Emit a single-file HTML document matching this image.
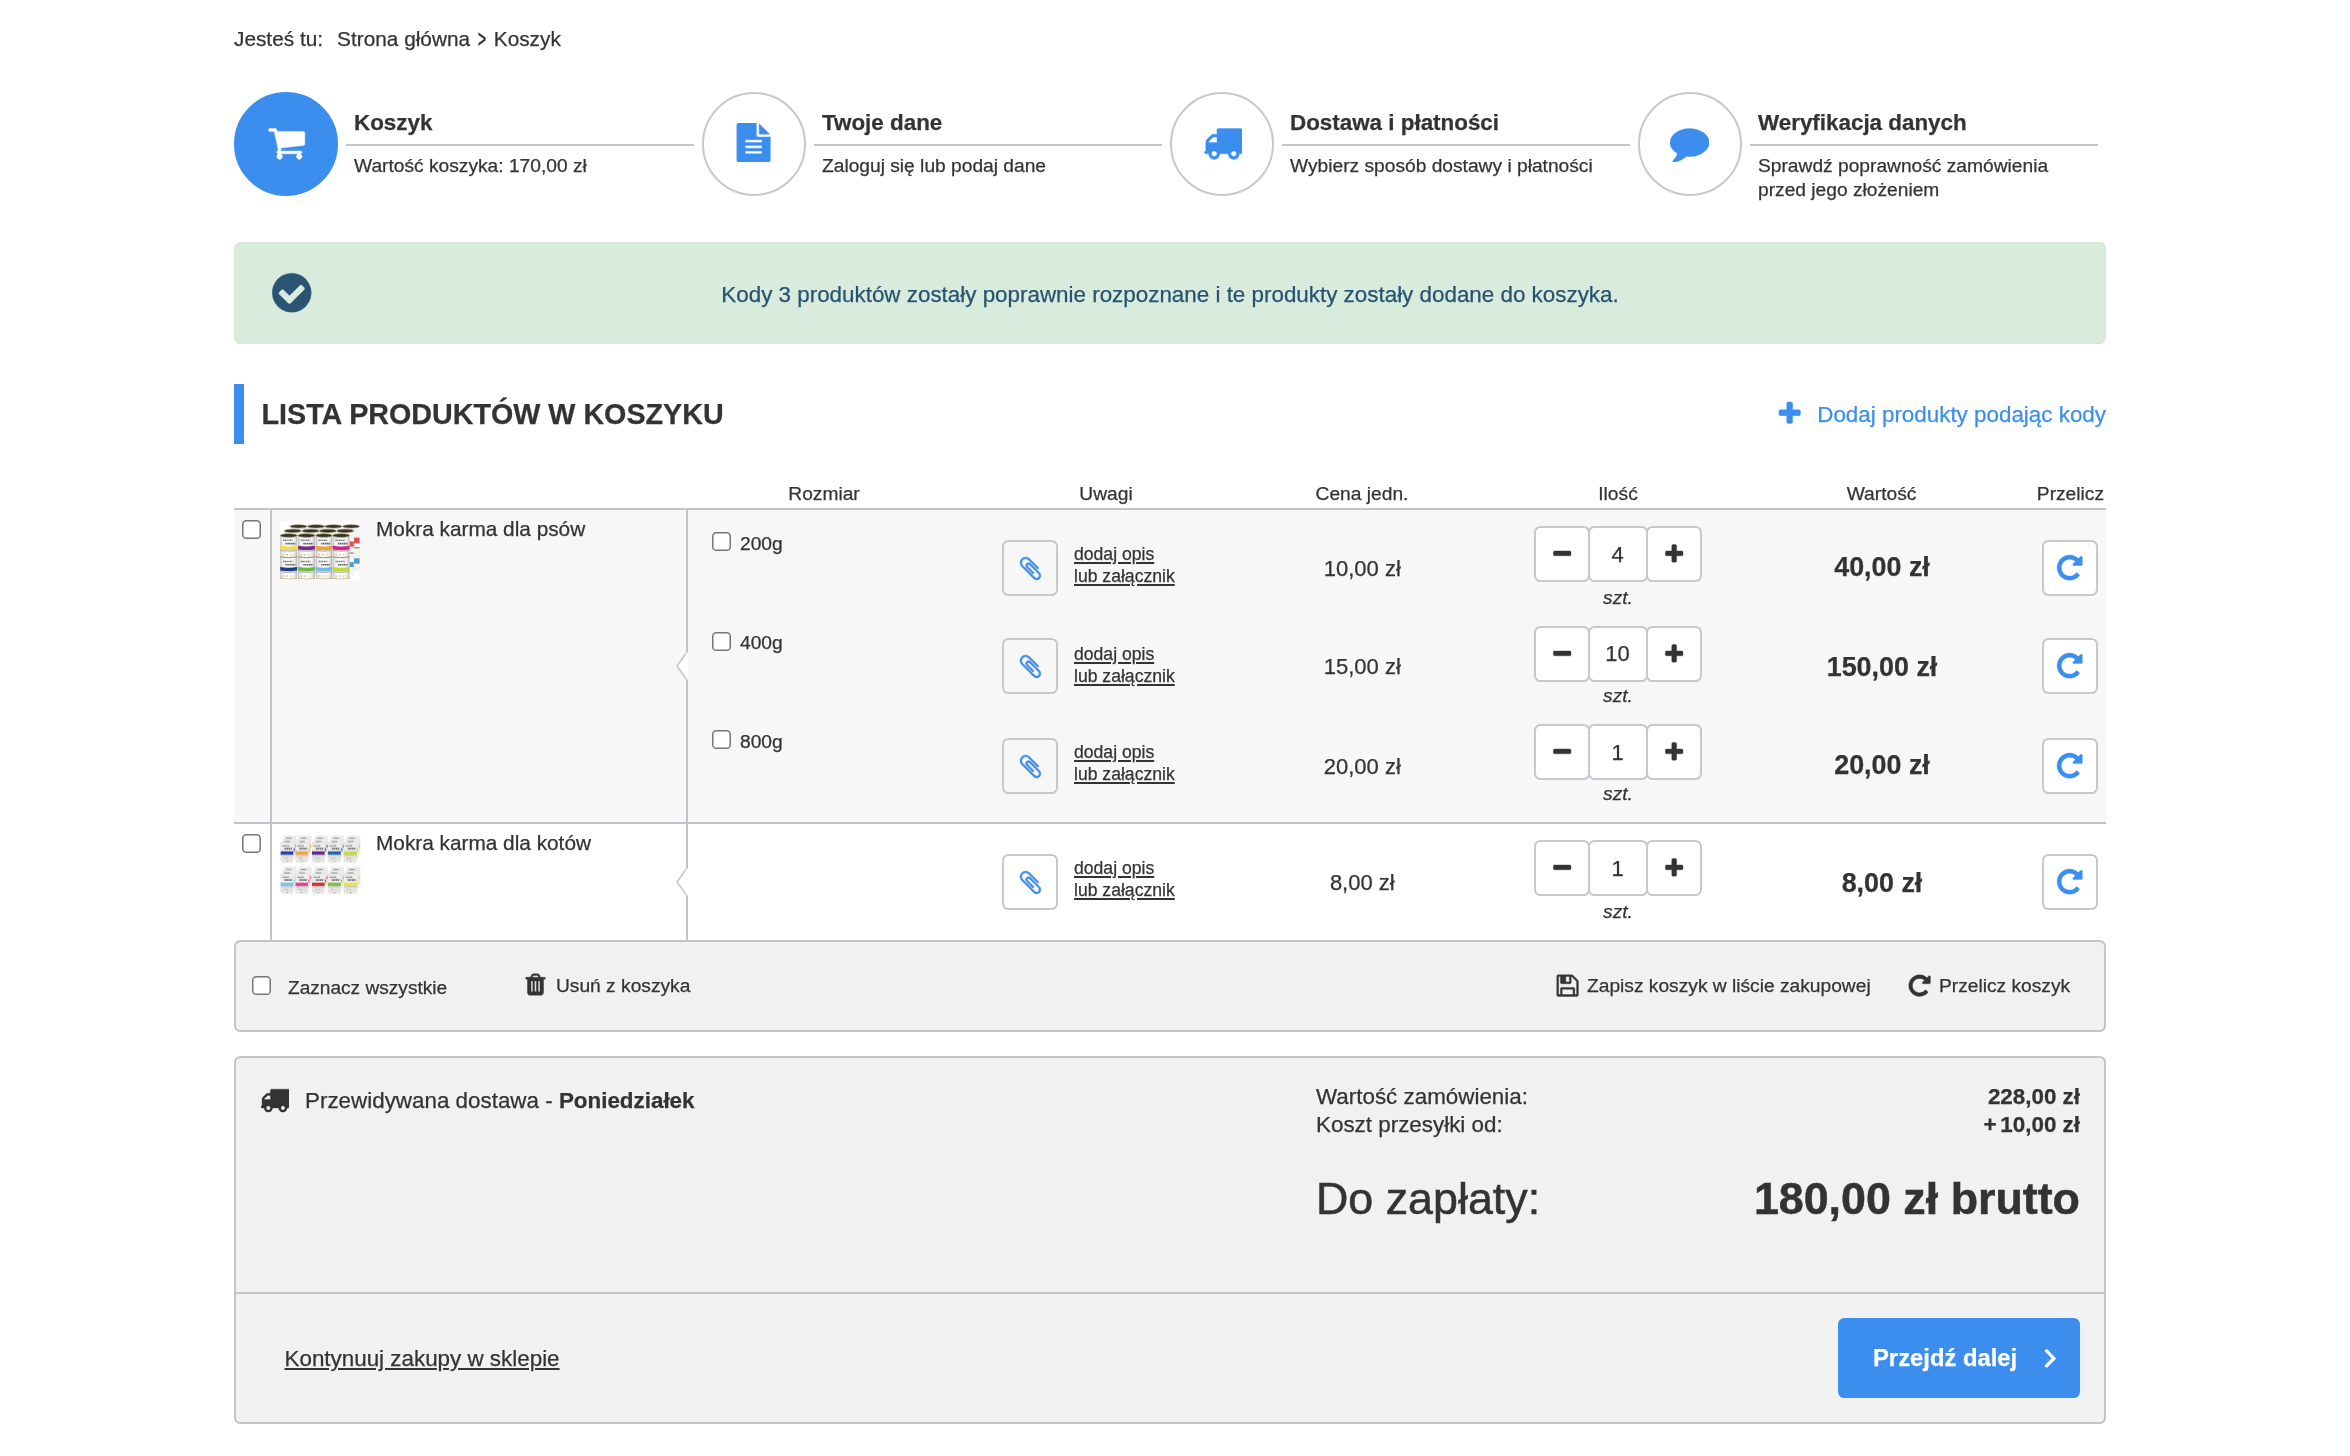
<!DOCTYPE html>
<html lang="pl">
<head>
<meta charset="utf-8">
<title>Koszyk</title>
<style>
*{box-sizing:border-box;margin:0;padding:0}
html,body{width:2350px;height:1456px;background:#fff;overflow:hidden}
body{-webkit-text-stroke:0.25px;font-family:"Liberation Sans",Arial,Helvetica,sans-serif;color:#333;position:relative;font-size:20.8px}
#page{position:absolute;left:0;top:0;width:2350px;height:1456px;will-change:transform}
.abs{position:absolute;white-space:nowrap}
svg{display:block}
a{color:inherit}
h1{font-weight:bold}
.bc span.l{margin-right:8.3px}
.bc .gt{display:inline-block;transform:scale(.66,1.18);-webkit-text-stroke:.6px}
.circ{width:104px;height:104px;border-radius:50%;border:2px solid #c6c8ca;background:#fff}
.circ.on{background:#3c8eee;border-color:#3c8eee}
.ln{background:#c2c5c7}
.alert{background:#d9ebdd;border:2px solid #d5ead8;border-radius:6.4px}
.hbar{background:#3c8eee}
.row1bg{background:#f7f7f7}
.hl{background:#c2c5c7}
.vl{background:#c2c5c7}
.cb{width:19px;height:19px;border:1.5px solid #767676;border-radius:4.5px;background:#fff}
.ibtn{width:56px;height:56px;border:2px solid #c6c9cb;border-radius:6.4px;background:#fff}
.clipb{background:transparent}
.note{text-decoration:underline;text-decoration-thickness:2px;text-underline-offset:2px}
.qb{width:56px;height:56px;border:2px solid #c6c9cb;border-radius:6.4px;background:#fff}
.qn{width:60px;height:56px;border:2px solid #c6c9cb;border-radius:6.4px;background:#fff}
.bar{background:#f1f1f1;border:2px solid #c3c5c7;border-radius:6.4px}
.sum{background:#f1f1f1;border:2px solid #c3c5c7;border-radius:6.4px}
.btn{background:#3c8eee;border-radius:6.4px}
</style>
</head>
<body>
<div id="page">
<nav class="abs bc" style="top:26px;font-size:20.8px;line-height:26px;left:234px;"><span class="l">Jesteś tu:</span> <a>Strona główna</a> <span class="gt">&gt;</span> <span>Koszyk</span></nav>

<div class="abs circ on" style="left:234px;top:92px;"></div>
<svg class="abs" style="left:266.5px;top:123px" width="39.2" height="39.2" viewBox="0 0 1792 1792"><path fill="#fff" stroke="#fff" stroke-width="18.3" d="M704 1536q0 52-38 90t-90 38-90-38-38-90 38-90 90-38 90 38 38 90zm896 0q0 52-38 90t-90 38-90-38-38-90 38-90 90-38 90 38 38 90zm128-1088v512q0 24-16.500 42.500t-40.500 21.500l-1044 122q13 60 13 70 0 16-24 64h920q26 0 45 19t19 45-19 45-45 19h-1024q-26 0-45-19t-19-45q0-11 8-31.500t16-36 21.500-40 15.500-29.500l-177-823h-204q-26 0-45-19t-19-45 19-45 45-19h256q16 0 28.500 6.500t19.500 15.500 13 24.500 8 26 5.500 29.500 4.500 26h1201q26 0 45 19t19 45z"/></svg>
<div class="abs" style="top:109px;font-size:22.4px;line-height:28px;font-weight:bold;left:354px;">Koszyk</div>
<div class="abs ln" style="left:346px;top:144px;width:348px;height:2px;"></div>
<div class="abs" style="top:154px;font-size:19.2px;line-height:24px;left:354px;">Wartość koszyka: 170,00 zł</div>
<div class="abs circ" style="left:702px;top:92px;"></div>
<svg class="abs" style="left:733.9px;top:123px" width="39.2" height="39.2" viewBox="0 0 1792 1792"><path fill="#3c8eee" stroke="#3c8eee" stroke-width="18.3" d="M1596 476q14 14 28 36h-472v-472q22 14 36 28zm-476 164h544v1056q0 40-28 68t-68 28h-1344q-40 0-68-28t-28-68v-1600q0-40 28-68t68-28h800v544q0 40 28 68t68 28zm160 736v-64q0-14-9-23t-23-9h-704q-14 0-23 9t-9 23v64q0 14 9 23t23 9h704q14 0 23-9t9-23zm0-256v-64q0-14-9-23t-23-9h-704q-14 0-23 9t-9 23v64q0 14 9 23t23 9h704q14 0 23-9t9-23zm0-256v-64q0-14-9-23t-23-9h-704q-14 0-23 9t-9 23v64q0 14 9 23t23 9h704q14 0 23-9t9-23z"/></svg>
<div class="abs" style="top:109px;font-size:22.4px;line-height:28px;font-weight:bold;left:822px;">Twoje dane</div>
<div class="abs ln" style="left:814px;top:144px;width:348px;height:2px;"></div>
<div class="abs" style="top:154px;font-size:19.2px;line-height:24px;left:822px;">Zaloguj się lub podaj dane</div>
<div class="abs circ" style="left:1170px;top:92px;"></div>
<svg class="abs" style="left:1202.6px;top:123px" width="39.2" height="39.2" viewBox="0 0 1792 1792"><path fill="#3c8eee" stroke="#3c8eee" stroke-width="18.3" d="M640 1408q0-52-38-90t-90-38-90 38-38 90 38 90 90 38 90-38 38-90zm-384-512h384v-256h-158q-13 0-22 9l-195 195q-9 9-9 22v30zm1280 512q0-52-38-90t-90-38-90 38-38 90 38 90 90 38 90-38 38-90zm256-1088v1024q0 15-4 26.500t-13.500 18.500-16.500 11.500-23.500 6-22.500 2-25.500 0-22.500-.5q0 106-75 181t-181 75-181-75-75-181h-384q0 106-75 181t-181 75-181-75-75-181h-64q-3 0-22.500.5t-25.500 0-22.500-2-23.500-6-16.500-11.500-13.500-18.500-4-26.500q0-26 19-45t45-19v-320q0-8-.5-35t0-38 2.500-34.500 6.500-37 14-30.500 22.500-30l198-198q19-19 50.500-32t58.500-13h160v-192q0-26 19-45t45-19h1024q26 0 45 19t19 45z"/></svg>
<div class="abs" style="top:109px;font-size:22.4px;line-height:28px;font-weight:bold;left:1290px;">Dostawa i płatności</div>
<div class="abs ln" style="left:1282px;top:144px;width:348px;height:2px;"></div>
<div class="abs" style="top:154px;font-size:19.2px;line-height:24px;left:1290px;">Wybierz sposób dostawy i płatności</div>
<div class="abs circ" style="left:1638px;top:92px;"></div>
<svg class="abs" style="left:1670.3px;top:123px" width="39.2" height="39.2" viewBox="0 0 1792 1792"><path fill="#3c8eee" stroke="#3c8eee" stroke-width="18.3" d="M1792 896q0 174-120 321.500t-326 233-450 85.500q-70 0-145-8-198 175-460 242-49 14-114 22-17 2-30.500-9t-17.500-29v-1q-3-4-.5-12t2-10 4.500-9.500l6-9 7-8.500 8-9q7-8 31-34.500t34.500-38 31-39.500 32.500-51 27-59 26-76q-157-89-247.500-220t-90.500-281q0-130 71-248.500t191-204.500 286-136.500 348-50.500q244 0 450 85.500t326 233 120 321.500z"/></svg>
<div class="abs" style="top:109px;font-size:22.4px;line-height:28px;font-weight:bold;left:1758px;">Weryfikacja danych</div>
<div class="abs ln" style="left:1750px;top:144px;width:348px;height:2px;"></div>
<div class="abs" style="top:154px;font-size:19.2px;line-height:24px;left:1758px;">Sprawdź poprawność zamówienia<br>przed jego złożeniem</div>

<div class="abs alert" style="left:234px;top:242px;width:1872px;height:102px;"></div>
<svg class="abs" style="left:269.25px;top:270.15px" width="45.5" height="45.5" viewBox="0 0 1792 1792"><path fill="#295573" stroke="#295573" stroke-width="15.8" d="M1412 734q0-28-18-46l-91-90q-19-19-45-19t-45 19l-408 407-226-226q-19-19-45-19t-45 19l-91 90q-18 18-18 46 0 27 18 45l362 362q19 19 45 19 27 0 46-19l543-543q18-18 18-45zm252 162q0 209-103 385.500t-279.500 279.500-385.500 103-385.500-103-279.500-279.500-103-385.500 103-385.500 279.500-279.500 385.500-103 385.500 103 279.500 279.500 103 385.500z"/></svg>
<div class="abs" style="top:281px;font-size:22.4px;line-height:28px;color:#265370;left:1170px;transform:translateX(-50%);">Kody 3 produktów zostały poprawnie rozpoznane i te produkty zostały dodane do koszyka.</div>

<div class="abs hbar" style="left:234px;top:384px;width:10px;height:60px;"></div>
<h1 class="abs" style="top:396px;font-size:28.7px;line-height:36px;font-weight:bold;left:261.5px;">LISTA PRODUKTÓW W KOSZYKU</h1>
<svg class="abs" style="left:1776.3px;top:400.48px" width="27.4" height="27.4" viewBox="0 0 1792 1792"><path fill="#3c8eee" stroke="#3c8eee" stroke-width="26.2" d="M1600 736v192q0 40-28 68t-68 28h-416v416q0 40-28 68t-68 28h-192q-40 0-68-28t-28-68v-416h-416q-40 0-68-28t-28-68v-192q0-40 28-68t68-28h416v-416q0-40 28-68t68-28h192q40 0 68 28t28 68v416h416q40 0 68 28t28 68z"/></svg>
<a class="abs" style="top:401px;font-size:22.4px;line-height:28px;color:#3c8eee;right:244px;">Dodaj produkty podając kody</a>

<div class="abs" style="top:482px;font-size:19.2px;line-height:24px;left:824px;transform:translateX(-50%);">Rozmiar</div>
<div class="abs" style="top:482px;font-size:19.2px;line-height:24px;left:1106px;transform:translateX(-50%);">Uwagi</div>
<div class="abs" style="top:482px;font-size:19.2px;line-height:24px;left:1362px;transform:translateX(-50%);">Cena jedn.</div>
<div class="abs" style="top:482px;font-size:19.2px;line-height:24px;left:1618px;transform:translateX(-50%);">Ilość</div>
<div class="abs" style="top:482px;font-size:19.2px;line-height:24px;left:1881.5px;transform:translateX(-50%);">Wartość</div>
<div class="abs" style="top:482px;font-size:19.2px;line-height:24px;right:246px;">Przelicz</div>
<div class="abs row1bg" style="left:234px;top:510px;width:1872px;height:312px;"></div>
<div class="abs hl" style="left:234px;top:508px;width:1872px;height:2px;"></div>
<div class="abs hl" style="left:234px;top:822px;width:1872px;height:2px;"></div>
<div class="abs vl" style="left:270px;top:510px;width:2px;height:430px;"></div>
<div class="abs vl" style="left:686px;top:510px;width:2px;height:430px;"></div>
<svg class="abs" style="left:675px;top:650.8px" width="13" height="30" viewBox="0 0 13 30"><path d="M12 1 L2 15 L12 29 Z" fill="#fff"/><path d="M12 1 L2 15 L12 29" fill="none" stroke="#ccc" stroke-width="1.8"/><rect x="11.2" y="1.8" width="1.8" height="26.4" fill="#fff"/></svg>
<svg class="abs" style="left:675px;top:866.6px" width="13" height="30" viewBox="0 0 13 30"><path d="M12 1 L2 15 L12 29 Z" fill="#fff"/><path d="M12 1 L2 15 L12 29" fill="none" stroke="#ccc" stroke-width="1.8"/><rect x="11.2" y="1.8" width="1.8" height="26.4" fill="#fff"/></svg>
<svg class="abs" style="left:242px;top:520px" width="19" height="19" viewBox="0 0 19 19"><rect x=".75" y=".75" width="17.5" height="17.5" rx="3.6" fill="#fff" stroke="#767676" stroke-width="1.5"/></svg>
<svg class="abs" style="left:242px;top:834px" width="19" height="19" viewBox="0 0 19 19"><rect x=".75" y=".75" width="17.5" height="17.5" rx="3.6" fill="#fff" stroke="#767676" stroke-width="1.5"/></svg>
<div class="abs" style="top:516px;font-size:20.8px;line-height:26px;left:376px;">Mokra karma dla psów</div>
<div class="abs" style="top:830px;font-size:20.8px;line-height:26px;left:376px;">Mokra karma dla kotów</div>
<svg class="abs" style="left:274px;top:516px" width="96" height="70" viewBox="0 0 1997 1456" aria-hidden="true"><defs><filter id="bl1" x="-5%" y="-5%" width="110%" height="110%"><feGaussianBlur stdDeviation="7"/></filter><linearGradient id="cg" x1="0" x2="1" y1="0" y2="0"><stop offset="0" stop-color="#b9b9b9"/><stop offset=".12" stop-color="#ececec"/><stop offset=".45" stop-color="#fff"/><stop offset=".85" stop-color="#efefef"/><stop offset="1" stop-color="#b4b4b4"/></linearGradient></defs><rect x="120" y="100" width="1670" height="1240" fill="#fff"/><g filter="url(#bl1)"><rect x="335" y="215" width="1445" height="920" fill="#e9e9e9"/><rect x="1660" y="215" width="120" height="920" fill="#f2f2f2"/><rect x="1665" y="450" width="115" height="120" fill="#d8352c" opacity=".85"/><rect x="1665" y="880" width="115" height="110" fill="#2d8fc4" opacity=".85"/><rect x="1660" y="650" width="120" height="22" fill="#8c7a48"/><ellipse cx="510" cy="215" rx="175" ry="34" fill="#34332c" stroke="#97834a" stroke-width="12"/><ellipse cx="875" cy="215" rx="175" ry="34" fill="#34332c" stroke="#97834a" stroke-width="12"/><ellipse cx="1235" cy="215" rx="175" ry="34" fill="#34332c" stroke="#97834a" stroke-width="12"/><ellipse cx="1605" cy="215" rx="175" ry="34" fill="#34332c" stroke="#97834a" stroke-width="12"/><rect x="215" y="310" width="1440" height="920" fill="#ececec"/><rect x="1570" y="310" width="90" height="920" fill="#f4f4f4"/><rect x="1575" y="530" width="85" height="110" fill="#d8352c" opacity=".85"/><rect x="1575" y="960" width="85" height="100" fill="#2d8fc4" opacity=".85"/><rect x="1570" y="760" width="90" height="22" fill="#8c7a48"/><ellipse cx="390" cy="310" rx="175" ry="34" fill="#34332c" stroke="#97834a" stroke-width="12"/><ellipse cx="760" cy="310" rx="175" ry="34" fill="#34332c" stroke="#97834a" stroke-width="12"/><ellipse cx="1120" cy="310" rx="175" ry="34" fill="#34332c" stroke="#97834a" stroke-width="12"/><ellipse cx="1482" cy="310" rx="175" ry="34" fill="#34332c" stroke="#97834a" stroke-width="12"/><rect x="130" y="405" width="350" height="455" fill="url(#cg)"/><path d="M130 620 Q305.0 650 480 620 L480 695 Q305.0 725 130 695 Z" fill="#f2dc4a"/><path d="M130 702 Q305.0 732 480 702 L480 730 Q305.0 760 130 730 Z" fill="#b5b5b5"/><path d="M190 505 h192.50000000000003" stroke="#555" stroke-width="30" stroke-dasharray="26 10" opacity=".8"/><path d="M240 575 h203.0" stroke="#444" stroke-width="34" stroke-dasharray="30 9" opacity=".85"/><circle cx="200" cy="805" r="16" fill="#d9b25a"/><circle cx="275" cy="805" r="16" fill="#8cc66a"/><circle cx="350" cy="805" r="16" fill="#ecc98a"/><circle cx="425" cy="805" r="16" fill="#ecdc7a"/><rect x="130" y="860" width="350" height="450" fill="url(#cg)"/><path d="M130 1060 Q305.0 1090 480 1060 L480 1135 Q305.0 1165 130 1135 Z" fill="#1f3b8c"/><path d="M130 1142 Q305.0 1172 480 1142 L480 1170 Q305.0 1200 130 1170 Z" fill="#b5b5b5"/><path d="M190 945 h192.50000000000003" stroke="#555" stroke-width="30" stroke-dasharray="26 10" opacity=".8"/><path d="M240 1015 h203.0" stroke="#444" stroke-width="34" stroke-dasharray="30 9" opacity=".85"/><circle cx="200" cy="1250" r="16" fill="#d9b25a"/><circle cx="275" cy="1250" r="16" fill="#8cc66a"/><circle cx="350" cy="1250" r="16" fill="#ecc98a"/><circle cx="425" cy="1250" r="16" fill="#ecdc7a"/><ellipse cx="305.0" cy="405" rx="173.0" ry="36" fill="#34332c" stroke="#97834a" stroke-width="12"/><path d="M130 850 Q305.0 885 480 850" fill="none" stroke="#7d6d3f" stroke-width="16"/><path d="M130 1295 Q305.0 1330 480 1295" fill="none" stroke="#b9a86a" stroke-width="14"/><rect x="500" y="405" width="350" height="455" fill="url(#cg)"/><path d="M500 620 Q675.0 650 850 620 L850 695 Q675.0 725 500 695 Z" fill="#7b2c8e"/><path d="M500 702 Q675.0 732 850 702 L850 730 Q675.0 760 500 730 Z" fill="#b5b5b5"/><path d="M560 505 h192.50000000000003" stroke="#555" stroke-width="30" stroke-dasharray="26 10" opacity=".8"/><path d="M610 575 h203.0" stroke="#444" stroke-width="34" stroke-dasharray="30 9" opacity=".85"/><circle cx="570" cy="805" r="16" fill="#d9b25a"/><circle cx="645" cy="805" r="16" fill="#8cc66a"/><circle cx="720" cy="805" r="16" fill="#ecc98a"/><circle cx="795" cy="805" r="16" fill="#ecdc7a"/><rect x="500" y="860" width="350" height="450" fill="url(#cg)"/><path d="M500 1060 Q675.0 1090 850 1060 L850 1135 Q675.0 1165 500 1135 Z" fill="#6bb843"/><path d="M500 1142 Q675.0 1172 850 1142 L850 1170 Q675.0 1200 500 1170 Z" fill="#b5b5b5"/><path d="M560 945 h192.50000000000003" stroke="#555" stroke-width="30" stroke-dasharray="26 10" opacity=".8"/><path d="M610 1015 h203.0" stroke="#444" stroke-width="34" stroke-dasharray="30 9" opacity=".85"/><circle cx="570" cy="1250" r="16" fill="#d9b25a"/><circle cx="645" cy="1250" r="16" fill="#8cc66a"/><circle cx="720" cy="1250" r="16" fill="#ecc98a"/><circle cx="795" cy="1250" r="16" fill="#ecdc7a"/><ellipse cx="675.0" cy="405" rx="173.0" ry="36" fill="#34332c" stroke="#97834a" stroke-width="12"/><path d="M500 850 Q675.0 885 850 850" fill="none" stroke="#7d6d3f" stroke-width="16"/><path d="M500 1295 Q675.0 1330 850 1295" fill="none" stroke="#b9a86a" stroke-width="14"/><rect x="870" y="405" width="335" height="455" fill="url(#cg)"/><path d="M870 620 Q1037.5 650 1205 620 L1205 695 Q1037.5 725 870 695 Z" fill="#f1a236"/><path d="M870 702 Q1037.5 732 1205 702 L1205 730 Q1037.5 760 870 730 Z" fill="#b5b5b5"/><path d="M930 505 h184.25000000000003" stroke="#555" stroke-width="30" stroke-dasharray="26 10" opacity=".8"/><path d="M980 575 h194.29999999999998" stroke="#444" stroke-width="34" stroke-dasharray="30 9" opacity=".85"/><circle cx="940" cy="805" r="16" fill="#d9b25a"/><circle cx="1015" cy="805" r="16" fill="#8cc66a"/><circle cx="1090" cy="805" r="16" fill="#ecc98a"/><circle cx="1165" cy="805" r="16" fill="#ecdc7a"/><rect x="870" y="860" width="335" height="450" fill="url(#cg)"/><path d="M870 1060 Q1037.5 1090 1205 1060 L1205 1135 Q1037.5 1165 870 1135 Z" fill="#6fb9e9"/><path d="M870 1142 Q1037.5 1172 1205 1142 L1205 1170 Q1037.5 1200 870 1170 Z" fill="#b5b5b5"/><path d="M930 945 h184.25000000000003" stroke="#555" stroke-width="30" stroke-dasharray="26 10" opacity=".8"/><path d="M980 1015 h194.29999999999998" stroke="#444" stroke-width="34" stroke-dasharray="30 9" opacity=".85"/><circle cx="940" cy="1250" r="16" fill="#d9b25a"/><circle cx="1015" cy="1250" r="16" fill="#8cc66a"/><circle cx="1090" cy="1250" r="16" fill="#ecc98a"/><circle cx="1165" cy="1250" r="16" fill="#ecdc7a"/><ellipse cx="1037.5" cy="405" rx="165.5" ry="36" fill="#34332c" stroke="#97834a" stroke-width="12"/><path d="M870 850 Q1037.5 885 1205 850" fill="none" stroke="#7d6d3f" stroke-width="16"/><path d="M870 1295 Q1037.5 1330 1205 1295" fill="none" stroke="#b9a86a" stroke-width="14"/><rect x="1220" y="405" width="350" height="455" fill="url(#cg)"/><path d="M1220 620 Q1395.0 650 1570 620 L1570 695 Q1395.0 725 1220 695 Z" fill="#d8218b"/><path d="M1220 702 Q1395.0 732 1570 702 L1570 730 Q1395.0 760 1220 730 Z" fill="#b5b5b5"/><path d="M1280 505 h192.50000000000003" stroke="#555" stroke-width="30" stroke-dasharray="26 10" opacity=".8"/><path d="M1330 575 h203.0" stroke="#444" stroke-width="34" stroke-dasharray="30 9" opacity=".85"/><circle cx="1290" cy="805" r="16" fill="#d9b25a"/><circle cx="1365" cy="805" r="16" fill="#8cc66a"/><circle cx="1440" cy="805" r="16" fill="#ecc98a"/><circle cx="1515" cy="805" r="16" fill="#ecdc7a"/><rect x="1220" y="860" width="350" height="450" fill="url(#cg)"/><path d="M1220 1060 Q1395.0 1090 1570 1060 L1570 1135 Q1395.0 1165 1220 1135 Z" fill="#bcd934"/><path d="M1220 1142 Q1395.0 1172 1570 1142 L1570 1170 Q1395.0 1200 1220 1170 Z" fill="#b5b5b5"/><path d="M1280 945 h192.50000000000003" stroke="#555" stroke-width="30" stroke-dasharray="26 10" opacity=".8"/><path d="M1330 1015 h203.0" stroke="#444" stroke-width="34" stroke-dasharray="30 9" opacity=".85"/><circle cx="1290" cy="1250" r="16" fill="#d9b25a"/><circle cx="1365" cy="1250" r="16" fill="#8cc66a"/><circle cx="1440" cy="1250" r="16" fill="#ecc98a"/><circle cx="1515" cy="1250" r="16" fill="#ecdc7a"/><ellipse cx="1395.0" cy="405" rx="173.0" ry="36" fill="#34332c" stroke="#97834a" stroke-width="12"/><path d="M1220 850 Q1395.0 885 1570 850" fill="none" stroke="#7d6d3f" stroke-width="16"/><path d="M1220 1295 Q1395.0 1330 1570 1295" fill="none" stroke="#b9a86a" stroke-width="14"/></g></svg>
<svg class="abs" style="left:274px;top:826px" width="96" height="80" viewBox="0 0 1747 1456" aria-hidden="true"><defs><filter id="bl2" x="-5%" y="-5%" width="110%" height="110%"><feGaussianBlur stdDeviation="8"/></filter></defs><g filter="url(#bl2)"><rect x="176" y="176" width="230" height="330" rx="18" fill="#ececec" stroke="#dcdcdc" stroke-width="6"/><rect x="216" y="214" width="103.5" height="16" fill="#4a4a4a" opacity=".75"/><rect x="380" y="341" width="26" height="55" fill="#2443ab" opacity=".85"/><rect x="148" y="238" width="230" height="330" rx="18" fill="#ececec" stroke="#dcdcdc" stroke-width="6"/><rect x="188" y="276" width="103.5" height="16" fill="#4a4a4a" opacity=".75"/><rect x="352" y="403" width="26" height="55" fill="#2443ab" opacity=".85"/><path d="M120 300 h230 v300 q0 60 -40 60 h-150 q-40 0 -40 -60 Z" fill="#e6e6e6" stroke="#d6d6d6" stroke-width="6"/><rect x="130" y="310" width="210" height="140" fill="#efefef"/><rect x="120" y="460" width="230" height="62" fill="#2443ab"/><rect x="128" y="526" width="214" height="18" fill="#bcbcbc"/><path d="M150 362 h126.50000000000001" stroke="#555" stroke-width="26" stroke-dasharray="24 8" opacity=".75"/><path d="M190 412 h142.6" stroke="#444" stroke-width="30" stroke-dasharray="28 8" opacity=".8"/><circle cx="195" cy="585" r="12" fill="#cf8a6a"/><circle cx="240" cy="585" r="12" fill="#86c06a"/><circle cx="285" cy="585" r="12" fill="#ecc98a"/><rect x="223.0" y="630" width="26" height="9" fill="#555"/><rect x="446" y="176" width="230" height="330" rx="18" fill="#ececec" stroke="#dcdcdc" stroke-width="6"/><rect x="486" y="214" width="103.5" height="16" fill="#4a4a4a" opacity=".75"/><rect x="650" y="341" width="26" height="55" fill="#f1a340" opacity=".85"/><rect x="418" y="238" width="230" height="330" rx="18" fill="#ececec" stroke="#dcdcdc" stroke-width="6"/><rect x="458" y="276" width="103.5" height="16" fill="#4a4a4a" opacity=".75"/><rect x="622" y="403" width="26" height="55" fill="#f1a340" opacity=".85"/><path d="M390 300 h230 v300 q0 60 -40 60 h-150 q-40 0 -40 -60 Z" fill="#e6e6e6" stroke="#d6d6d6" stroke-width="6"/><rect x="400" y="310" width="210" height="140" fill="#efefef"/><rect x="390" y="460" width="230" height="62" fill="#f1a340"/><rect x="398" y="526" width="214" height="18" fill="#bcbcbc"/><path d="M420 362 h126.50000000000001" stroke="#555" stroke-width="26" stroke-dasharray="24 8" opacity=".75"/><path d="M460 412 h142.6" stroke="#444" stroke-width="30" stroke-dasharray="28 8" opacity=".8"/><circle cx="465" cy="585" r="12" fill="#cf8a6a"/><circle cx="510" cy="585" r="12" fill="#86c06a"/><circle cx="555" cy="585" r="12" fill="#ecc98a"/><rect x="493.0" y="630" width="26" height="9" fill="#555"/><rect x="746" y="176" width="230" height="330" rx="18" fill="#ececec" stroke="#dcdcdc" stroke-width="6"/><rect x="786" y="214" width="103.5" height="16" fill="#4a4a4a" opacity=".75"/><rect x="950" y="341" width="26" height="55" fill="#5b2c8a" opacity=".85"/><rect x="718" y="238" width="230" height="330" rx="18" fill="#ececec" stroke="#dcdcdc" stroke-width="6"/><rect x="758" y="276" width="103.5" height="16" fill="#4a4a4a" opacity=".75"/><rect x="922" y="403" width="26" height="55" fill="#5b2c8a" opacity=".85"/><path d="M690 300 h230 v300 q0 60 -40 60 h-150 q-40 0 -40 -60 Z" fill="#e6e6e6" stroke="#d6d6d6" stroke-width="6"/><rect x="700" y="310" width="210" height="140" fill="#efefef"/><rect x="690" y="460" width="230" height="62" fill="#5b2c8a"/><rect x="698" y="526" width="214" height="18" fill="#bcbcbc"/><path d="M720 362 h126.50000000000001" stroke="#555" stroke-width="26" stroke-dasharray="24 8" opacity=".75"/><path d="M760 412 h142.6" stroke="#444" stroke-width="30" stroke-dasharray="28 8" opacity=".8"/><circle cx="765" cy="585" r="12" fill="#cf8a6a"/><circle cx="810" cy="585" r="12" fill="#86c06a"/><circle cx="855" cy="585" r="12" fill="#ecc98a"/><rect x="793.0" y="630" width="26" height="9" fill="#555"/><rect x="1036" y="176" width="235" height="330" rx="18" fill="#ececec" stroke="#dcdcdc" stroke-width="6"/><rect x="1076" y="214" width="105.75" height="16" fill="#4a4a4a" opacity=".75"/><rect x="1245" y="341" width="26" height="55" fill="#2163b3" opacity=".85"/><rect x="1008" y="238" width="235" height="330" rx="18" fill="#ececec" stroke="#dcdcdc" stroke-width="6"/><rect x="1048" y="276" width="105.75" height="16" fill="#4a4a4a" opacity=".75"/><rect x="1217" y="403" width="26" height="55" fill="#2163b3" opacity=".85"/><path d="M980 300 h235 v300 q0 60 -40 60 h-155 q-40 0 -40 -60 Z" fill="#e6e6e6" stroke="#d6d6d6" stroke-width="6"/><rect x="990" y="310" width="215" height="140" fill="#efefef"/><rect x="980" y="460" width="235" height="62" fill="#2163b3"/><rect x="988" y="526" width="219" height="18" fill="#bcbcbc"/><path d="M1010 362 h129.25" stroke="#555" stroke-width="26" stroke-dasharray="24 8" opacity=".75"/><path d="M1050 412 h145.7" stroke="#444" stroke-width="30" stroke-dasharray="28 8" opacity=".8"/><circle cx="1055" cy="585" r="12" fill="#cf8a6a"/><circle cx="1100" cy="585" r="12" fill="#86c06a"/><circle cx="1145" cy="585" r="12" fill="#ecc98a"/><rect x="1085.5" y="630" width="26" height="9" fill="#555"/><rect x="1326" y="176" width="240" height="330" rx="18" fill="#ececec" stroke="#dcdcdc" stroke-width="6"/><rect x="1366" y="214" width="108.0" height="16" fill="#4a4a4a" opacity=".75"/><rect x="1540" y="341" width="26" height="55" fill="#c9da3f" opacity=".85"/><rect x="1298" y="238" width="240" height="330" rx="18" fill="#ececec" stroke="#dcdcdc" stroke-width="6"/><rect x="1338" y="276" width="108.0" height="16" fill="#4a4a4a" opacity=".75"/><rect x="1512" y="403" width="26" height="55" fill="#c9da3f" opacity=".85"/><path d="M1270 300 h240 v300 q0 60 -40 60 h-160 q-40 0 -40 -60 Z" fill="#e6e6e6" stroke="#d6d6d6" stroke-width="6"/><rect x="1280" y="310" width="220" height="140" fill="#efefef"/><rect x="1270" y="460" width="240" height="62" fill="#c9da3f"/><rect x="1278" y="526" width="224" height="18" fill="#bcbcbc"/><path d="M1300 362 h132.0" stroke="#555" stroke-width="26" stroke-dasharray="24 8" opacity=".75"/><path d="M1340 412 h148.8" stroke="#444" stroke-width="30" stroke-dasharray="28 8" opacity=".8"/><circle cx="1345" cy="585" r="12" fill="#cf8a6a"/><circle cx="1390" cy="585" r="12" fill="#86c06a"/><circle cx="1435" cy="585" r="12" fill="#ecc98a"/><rect x="1378.0" y="630" width="26" height="9" fill="#555"/><rect x="176" y="746" width="230" height="330" rx="18" fill="#ececec" stroke="#dcdcdc" stroke-width="6"/><rect x="216" y="784" width="103.5" height="16" fill="#4a4a4a" opacity=".75"/><rect x="380" y="911" width="26" height="55" fill="#71c9ea" opacity=".85"/><rect x="148" y="808" width="230" height="330" rx="18" fill="#ececec" stroke="#dcdcdc" stroke-width="6"/><rect x="188" y="846" width="103.5" height="16" fill="#4a4a4a" opacity=".75"/><rect x="352" y="973" width="26" height="55" fill="#71c9ea" opacity=".85"/><path d="M120 870 h230 v300 q0 60 -40 60 h-150 q-40 0 -40 -60 Z" fill="#e6e6e6" stroke="#d6d6d6" stroke-width="6"/><rect x="130" y="880" width="210" height="140" fill="#efefef"/><rect x="120" y="1030" width="230" height="62" fill="#71c9ea"/><rect x="128" y="1096" width="214" height="18" fill="#bcbcbc"/><path d="M150 932 h126.50000000000001" stroke="#555" stroke-width="26" stroke-dasharray="24 8" opacity=".75"/><path d="M190 982 h142.6" stroke="#444" stroke-width="30" stroke-dasharray="28 8" opacity=".8"/><circle cx="195" cy="1155" r="12" fill="#cf8a6a"/><circle cx="240" cy="1155" r="12" fill="#86c06a"/><circle cx="285" cy="1155" r="12" fill="#ecc98a"/><rect x="223.0" y="1200" width="26" height="9" fill="#555"/><rect x="446" y="746" width="230" height="330" rx="18" fill="#ececec" stroke="#dcdcdc" stroke-width="6"/><rect x="486" y="784" width="103.5" height="16" fill="#4a4a4a" opacity=".75"/><rect x="650" y="911" width="26" height="55" fill="#ea4189" opacity=".85"/><rect x="418" y="808" width="230" height="330" rx="18" fill="#ececec" stroke="#dcdcdc" stroke-width="6"/><rect x="458" y="846" width="103.5" height="16" fill="#4a4a4a" opacity=".75"/><rect x="622" y="973" width="26" height="55" fill="#ea4189" opacity=".85"/><path d="M390 870 h230 v300 q0 60 -40 60 h-150 q-40 0 -40 -60 Z" fill="#e6e6e6" stroke="#d6d6d6" stroke-width="6"/><rect x="400" y="880" width="210" height="140" fill="#efefef"/><rect x="390" y="1030" width="230" height="62" fill="#ea4189"/><rect x="398" y="1096" width="214" height="18" fill="#bcbcbc"/><path d="M420 932 h126.50000000000001" stroke="#555" stroke-width="26" stroke-dasharray="24 8" opacity=".75"/><path d="M460 982 h142.6" stroke="#444" stroke-width="30" stroke-dasharray="28 8" opacity=".8"/><circle cx="465" cy="1155" r="12" fill="#cf8a6a"/><circle cx="510" cy="1155" r="12" fill="#86c06a"/><circle cx="555" cy="1155" r="12" fill="#ecc98a"/><rect x="493.0" y="1200" width="26" height="9" fill="#555"/><rect x="746" y="746" width="230" height="330" rx="18" fill="#ececec" stroke="#dcdcdc" stroke-width="6"/><rect x="786" y="784" width="103.5" height="16" fill="#4a4a4a" opacity=".75"/><rect x="950" y="911" width="26" height="55" fill="#d9322f" opacity=".85"/><rect x="718" y="808" width="230" height="330" rx="18" fill="#ececec" stroke="#dcdcdc" stroke-width="6"/><rect x="758" y="846" width="103.5" height="16" fill="#4a4a4a" opacity=".75"/><rect x="922" y="973" width="26" height="55" fill="#d9322f" opacity=".85"/><path d="M690 870 h230 v300 q0 60 -40 60 h-150 q-40 0 -40 -60 Z" fill="#e6e6e6" stroke="#d6d6d6" stroke-width="6"/><rect x="700" y="880" width="210" height="140" fill="#efefef"/><rect x="690" y="1030" width="230" height="62" fill="#d9322f"/><rect x="698" y="1096" width="214" height="18" fill="#bcbcbc"/><path d="M720 932 h126.50000000000001" stroke="#555" stroke-width="26" stroke-dasharray="24 8" opacity=".75"/><path d="M760 982 h142.6" stroke="#444" stroke-width="30" stroke-dasharray="28 8" opacity=".8"/><circle cx="765" cy="1155" r="12" fill="#cf8a6a"/><circle cx="810" cy="1155" r="12" fill="#86c06a"/><circle cx="855" cy="1155" r="12" fill="#ecc98a"/><rect x="793.0" y="1200" width="26" height="9" fill="#555"/><rect x="1036" y="746" width="235" height="330" rx="18" fill="#ececec" stroke="#dcdcdc" stroke-width="6"/><rect x="1076" y="784" width="105.75" height="16" fill="#4a4a4a" opacity=".75"/><rect x="1245" y="911" width="26" height="55" fill="#82c242" opacity=".85"/><rect x="1008" y="808" width="235" height="330" rx="18" fill="#ececec" stroke="#dcdcdc" stroke-width="6"/><rect x="1048" y="846" width="105.75" height="16" fill="#4a4a4a" opacity=".75"/><rect x="1217" y="973" width="26" height="55" fill="#82c242" opacity=".85"/><path d="M980 870 h235 v300 q0 60 -40 60 h-155 q-40 0 -40 -60 Z" fill="#e6e6e6" stroke="#d6d6d6" stroke-width="6"/><rect x="990" y="880" width="215" height="140" fill="#efefef"/><rect x="980" y="1030" width="235" height="62" fill="#82c242"/><rect x="988" y="1096" width="219" height="18" fill="#bcbcbc"/><path d="M1010 932 h129.25" stroke="#555" stroke-width="26" stroke-dasharray="24 8" opacity=".75"/><path d="M1050 982 h145.7" stroke="#444" stroke-width="30" stroke-dasharray="28 8" opacity=".8"/><circle cx="1055" cy="1155" r="12" fill="#cf8a6a"/><circle cx="1100" cy="1155" r="12" fill="#86c06a"/><circle cx="1145" cy="1155" r="12" fill="#ecc98a"/><rect x="1085.5" y="1200" width="26" height="9" fill="#555"/><rect x="1326" y="746" width="240" height="330" rx="18" fill="#ececec" stroke="#dcdcdc" stroke-width="6"/><rect x="1366" y="784" width="108.0" height="16" fill="#4a4a4a" opacity=".75"/><rect x="1540" y="911" width="26" height="55" fill="#f1e23f" opacity=".85"/><rect x="1298" y="808" width="240" height="330" rx="18" fill="#ececec" stroke="#dcdcdc" stroke-width="6"/><rect x="1338" y="846" width="108.0" height="16" fill="#4a4a4a" opacity=".75"/><rect x="1512" y="973" width="26" height="55" fill="#f1e23f" opacity=".85"/><path d="M1270 870 h240 v300 q0 60 -40 60 h-160 q-40 0 -40 -60 Z" fill="#e6e6e6" stroke="#d6d6d6" stroke-width="6"/><rect x="1280" y="880" width="220" height="140" fill="#efefef"/><rect x="1270" y="1030" width="240" height="62" fill="#f1e23f"/><rect x="1278" y="1096" width="224" height="18" fill="#bcbcbc"/><path d="M1300 932 h132.0" stroke="#555" stroke-width="26" stroke-dasharray="24 8" opacity=".75"/><path d="M1340 982 h148.8" stroke="#444" stroke-width="30" stroke-dasharray="28 8" opacity=".8"/><circle cx="1345" cy="1155" r="12" fill="#cf8a6a"/><circle cx="1390" cy="1155" r="12" fill="#86c06a"/><circle cx="1435" cy="1155" r="12" fill="#ecc98a"/><rect x="1378.0" y="1200" width="26" height="9" fill="#555"/></g></svg>
<svg class="abs" style="left:712px;top:532px" width="19" height="19" viewBox="0 0 19 19"><rect x=".75" y=".75" width="17.5" height="17.5" rx="3.6" fill="#fff" stroke="#767676" stroke-width="1.5"/></svg>
<div class="abs" style="top:532px;font-size:19.2px;line-height:24px;left:740px;">200g</div>
<div class="abs ibtn clipb" style="left:1002px;top:540px;"></div>
<svg class="abs" style="left:1016.65px;top:555.1px" width="26.9" height="26.9" viewBox="0 0 1792 1792"><path fill="#3c8eee" stroke="#3c8eee" stroke-width="26.6" d="M1596 1385q0 117-79 196t-196 79q-135 0-235-100l-777-776q-113-115-113-271 0-159 110-270t269-111q158 0 273 113l605 606q10 10 10 22 0 16-30.500 46.500t-46.500 30.500q-13 0-23-10l-606-607q-79-77-181-77-106 0-179 75t-73 181q0 105 76 181l776 777q63 63 145 63 64 0 106-42t42-106q0-82-63-145l-581-581q-26-24-60-24-29 0-48 19t-19 48q0 32 25 59l410 410q10 10 10 22 0 16-31 47t-47 31q-12 0-22-10l-410-410q-63-61-63-149 0-82 57-139t139-57q88 0 149 63l581 581q100 98 100 235z"/></svg>
<a class="abs note" style="top:543px;font-size:17.6px;line-height:22px;left:1074px;">dodaj opis<br>lub załącznik</a>
<div class="abs" style="top:555px;font-size:22px;line-height:28px;left:1362.3px;transform:translateX(-50%);">10,00 zł</div>
<div class="abs qn" style="left:1588px;top:526px;"></div>
<div class="abs qb" style="left:1534px;top:526px;"></div>
<div class="abs qb" style="left:1646px;top:526px;"></div>
<div class="abs" style="top:541px;font-size:22px;line-height:28px;left:1617.5px;transform:translateX(-50%);">4</div>
<svg class="abs" style="left:1550.8px;top:542.8px" width="22.4" height="22.4" viewBox="0 0 1792 1792"><path fill="#333" stroke="#333" stroke-width="32.0" d="M1600 736v192q0 40-28 68t-68 28h-1216q-40 0-68-28t-28-68v-192q0-40 28-68t68-28h1216q40 0 68 28t28 68z"/></svg>
<svg class="abs" style="left:1663.3px;top:543.2px" width="22.4" height="22.4" viewBox="0 0 1792 1792"><path fill="#333" stroke="#333" stroke-width="32.0" d="M1600 736v192q0 40-28 68t-68 28h-416v416q0 40-28 68t-68 28h-192q-40 0-68-28t-28-68v-416h-416q-40 0-68-28t-28-68v-192q0-40 28-68t68-28h416v-416q0-40 28-68t68-28h192q40 0 68 28t28 68v416h416q40 0 68 28t28 68z"/></svg>
<div class="abs" style="top:586px;font-size:19.2px;line-height:24px;left:1618px;transform:translateX(-50%);font-style:italic;">szt.</div>
<div class="abs" style="top:550px;font-size:26.88px;line-height:34px;font-weight:bold;left:1882px;transform:translateX(-50%);">40,00 zł</div>
<div class="abs ibtn" style="left:2042px;top:540px;"></div>
<svg class="abs" style="left:2055.4px;top:552.9px" width="29.4" height="29.4" viewBox="0 0 1792 1792"><path fill="#3c8eee" stroke="#3c8eee" stroke-width="24.4" d="M1664 256v448q0 26-19 45t-45 19h-448q-42 0-59-40-17-39 14-69l138-138q-148-137-349-137-104 0-198.500 40.500t-163.500 109.500-109.500 163.500-40.500 198.500 40.500 198.500 109.500 163.500 163.500 109.500 198.500 40.500q119 0 225-52t179-147q7-10 23-12 15 0 25 9l137 138q9 8 9.500 20.500t-7.500 22.500q-109 132-264 204.500t-327 72.500q-156 0-298-61t-245-164-164-245-61-298 61-298 164-245 245-164 298-61q147 0 284.500 55.500t244.500 156.500l130-129q29-31 70-14 39 17 39 59z"/></svg>
<svg class="abs" style="left:712px;top:632px" width="19" height="19" viewBox="0 0 19 19"><rect x=".75" y=".75" width="17.5" height="17.5" rx="3.6" fill="#fff" stroke="#767676" stroke-width="1.5"/></svg>
<div class="abs" style="top:631px;font-size:19.2px;line-height:24px;left:740px;">400g</div>
<div class="abs ibtn clipb" style="left:1002px;top:638px;"></div>
<svg class="abs" style="left:1016.65px;top:653.1px" width="26.9" height="26.9" viewBox="0 0 1792 1792"><path fill="#3c8eee" stroke="#3c8eee" stroke-width="26.6" d="M1596 1385q0 117-79 196t-196 79q-135 0-235-100l-777-776q-113-115-113-271 0-159 110-270t269-111q158 0 273 113l605 606q10 10 10 22 0 16-30.500 46.500t-46.500 30.500q-13 0-23-10l-606-607q-79-77-181-77-106 0-179 75t-73 181q0 105 76 181l776 777q63 63 145 63 64 0 106-42t42-106q0-82-63-145l-581-581q-26-24-60-24-29 0-48 19t-19 48q0 32 25 59l410 410q10 10 10 22 0 16-31 47t-47 31q-12 0-22-10l-410-410q-63-61-63-149 0-82 57-139t139-57q88 0 149 63l581 581q100 98 100 235z"/></svg>
<a class="abs note" style="top:643px;font-size:17.6px;line-height:22px;left:1074px;">dodaj opis<br>lub załącznik</a>
<div class="abs" style="top:653px;font-size:22px;line-height:28px;left:1362.3px;transform:translateX(-50%);">15,00 zł</div>
<div class="abs qn" style="left:1588px;top:626px;"></div>
<div class="abs qb" style="left:1534px;top:626px;"></div>
<div class="abs qb" style="left:1646px;top:626px;"></div>
<div class="abs" style="top:640px;font-size:22px;line-height:28px;left:1617.5px;transform:translateX(-50%);">10</div>
<svg class="abs" style="left:1550.8px;top:642.8px" width="22.4" height="22.4" viewBox="0 0 1792 1792"><path fill="#333" stroke="#333" stroke-width="32.0" d="M1600 736v192q0 40-28 68t-68 28h-1216q-40 0-68-28t-28-68v-192q0-40 28-68t68-28h1216q40 0 68 28t28 68z"/></svg>
<svg class="abs" style="left:1663.3px;top:643.2px" width="22.4" height="22.4" viewBox="0 0 1792 1792"><path fill="#333" stroke="#333" stroke-width="32.0" d="M1600 736v192q0 40-28 68t-68 28h-416v416q0 40-28 68t-68 28h-192q-40 0-68-28t-28-68v-416h-416q-40 0-68-28t-28-68v-192q0-40 28-68t68-28h416v-416q0-40 28-68t68-28h192q40 0 68 28t28 68v416h416q40 0 68 28t28 68z"/></svg>
<div class="abs" style="top:684px;font-size:19.2px;line-height:24px;left:1618px;transform:translateX(-50%);font-style:italic;">szt.</div>
<div class="abs" style="top:650px;font-size:26.88px;line-height:34px;font-weight:bold;left:1882px;transform:translateX(-50%);">150,00 zł</div>
<div class="abs ibtn" style="left:2042px;top:638px;"></div>
<svg class="abs" style="left:2055.4px;top:650.9px" width="29.4" height="29.4" viewBox="0 0 1792 1792"><path fill="#3c8eee" stroke="#3c8eee" stroke-width="24.4" d="M1664 256v448q0 26-19 45t-45 19h-448q-42 0-59-40-17-39 14-69l138-138q-148-137-349-137-104 0-198.500 40.500t-163.500 109.500-109.500 163.500-40.500 198.500 40.500 198.500 109.500 163.500 163.500 109.500 198.500 40.500q119 0 225-52t179-147q7-10 23-12 15 0 25 9l137 138q9 8 9.500 20.500t-7.500 22.500q-109 132-264 204.500t-327 72.500q-156 0-298-61t-245-164-164-245-61-298 61-298 164-245 245-164 298-61q147 0 284.500 55.500t244.500 156.500l130-129q29-31 70-14 39 17 39 59z"/></svg>
<svg class="abs" style="left:712px;top:730px" width="19" height="19" viewBox="0 0 19 19"><rect x=".75" y=".75" width="17.5" height="17.5" rx="3.6" fill="#fff" stroke="#767676" stroke-width="1.5"/></svg>
<div class="abs" style="top:730px;font-size:19.2px;line-height:24px;left:740px;">800g</div>
<div class="abs ibtn clipb" style="left:1002px;top:738px;"></div>
<svg class="abs" style="left:1016.65px;top:753.1px" width="26.9" height="26.9" viewBox="0 0 1792 1792"><path fill="#3c8eee" stroke="#3c8eee" stroke-width="26.6" d="M1596 1385q0 117-79 196t-196 79q-135 0-235-100l-777-776q-113-115-113-271 0-159 110-270t269-111q158 0 273 113l605 606q10 10 10 22 0 16-30.500 46.500t-46.500 30.500q-13 0-23-10l-606-607q-79-77-181-77-106 0-179 75t-73 181q0 105 76 181l776 777q63 63 145 63 64 0 106-42t42-106q0-82-63-145l-581-581q-26-24-60-24-29 0-48 19t-19 48q0 32 25 59l410 410q10 10 10 22 0 16-31 47t-47 31q-12 0-22-10l-410-410q-63-61-63-149 0-82 57-139t139-57q88 0 149 63l581 581q100 98 100 235z"/></svg>
<a class="abs note" style="top:741px;font-size:17.6px;line-height:22px;left:1074px;">dodaj opis<br>lub załącznik</a>
<div class="abs" style="top:753px;font-size:22px;line-height:28px;left:1362.3px;transform:translateX(-50%);">20,00 zł</div>
<div class="abs qn" style="left:1588px;top:724px;"></div>
<div class="abs qb" style="left:1534px;top:724px;"></div>
<div class="abs qb" style="left:1646px;top:724px;"></div>
<div class="abs" style="top:739px;font-size:22px;line-height:28px;left:1617.5px;transform:translateX(-50%);">1</div>
<svg class="abs" style="left:1550.8px;top:740.8px" width="22.4" height="22.4" viewBox="0 0 1792 1792"><path fill="#333" stroke="#333" stroke-width="32.0" d="M1600 736v192q0 40-28 68t-68 28h-1216q-40 0-68-28t-28-68v-192q0-40 28-68t68-28h1216q40 0 68 28t28 68z"/></svg>
<svg class="abs" style="left:1663.3px;top:741.2px" width="22.4" height="22.4" viewBox="0 0 1792 1792"><path fill="#333" stroke="#333" stroke-width="32.0" d="M1600 736v192q0 40-28 68t-68 28h-416v416q0 40-28 68t-68 28h-192q-40 0-68-28t-28-68v-416h-416q-40 0-68-28t-28-68v-192q0-40 28-68t68-28h416v-416q0-40 28-68t68-28h192q40 0 68 28t28 68v416h416q40 0 68 28t28 68z"/></svg>
<div class="abs" style="top:782px;font-size:19.2px;line-height:24px;left:1618px;transform:translateX(-50%);font-style:italic;">szt.</div>
<div class="abs" style="top:748px;font-size:26.88px;line-height:34px;font-weight:bold;left:1882px;transform:translateX(-50%);">20,00 zł</div>
<div class="abs ibtn" style="left:2042px;top:738px;"></div>
<svg class="abs" style="left:2055.4px;top:750.9px" width="29.4" height="29.4" viewBox="0 0 1792 1792"><path fill="#3c8eee" stroke="#3c8eee" stroke-width="24.4" d="M1664 256v448q0 26-19 45t-45 19h-448q-42 0-59-40-17-39 14-69l138-138q-148-137-349-137-104 0-198.500 40.500t-163.500 109.500-109.500 163.500-40.500 198.500 40.500 198.500 109.500 163.500 163.500 109.500 198.500 40.500q119 0 225-52t179-147q7-10 23-12 15 0 25 9l137 138q9 8 9.500 20.500t-7.500 22.500q-109 132-264 204.500t-327 72.500q-156 0-298-61t-245-164-164-245-61-298 61-298 164-245 245-164 298-61q147 0 284.500 55.500t244.500 156.500l130-129q29-31 70-14 39 17 39 59z"/></svg>
<div class="abs ibtn clipb" style="left:1002px;top:854px;"></div>
<svg class="abs" style="left:1016.65px;top:869.1px" width="26.9" height="26.9" viewBox="0 0 1792 1792"><path fill="#3c8eee" stroke="#3c8eee" stroke-width="26.6" d="M1596 1385q0 117-79 196t-196 79q-135 0-235-100l-777-776q-113-115-113-271 0-159 110-270t269-111q158 0 273 113l605 606q10 10 10 22 0 16-30.500 46.500t-46.500 30.500q-13 0-23-10l-606-607q-79-77-181-77-106 0-179 75t-73 181q0 105 76 181l776 777q63 63 145 63 64 0 106-42t42-106q0-82-63-145l-581-581q-26-24-60-24-29 0-48 19t-19 48q0 32 25 59l410 410q10 10 10 22 0 16-31 47t-47 31q-12 0-22-10l-410-410q-63-61-63-149 0-82 57-139t139-57q88 0 149 63l581 581q100 98 100 235z"/></svg>
<a class="abs note" style="top:857px;font-size:17.6px;line-height:22px;left:1074px;">dodaj opis<br>lub załącznik</a>
<div class="abs" style="top:869px;font-size:22px;line-height:28px;left:1362.3px;transform:translateX(-50%);">8,00 zł</div>
<div class="abs qn" style="left:1588px;top:840px;"></div>
<div class="abs qb" style="left:1534px;top:840px;"></div>
<div class="abs qb" style="left:1646px;top:840px;"></div>
<div class="abs" style="top:855px;font-size:22px;line-height:28px;left:1617.5px;transform:translateX(-50%);">1</div>
<svg class="abs" style="left:1550.8px;top:856.8px" width="22.4" height="22.4" viewBox="0 0 1792 1792"><path fill="#333" stroke="#333" stroke-width="32.0" d="M1600 736v192q0 40-28 68t-68 28h-1216q-40 0-68-28t-28-68v-192q0-40 28-68t68-28h1216q40 0 68 28t28 68z"/></svg>
<svg class="abs" style="left:1663.3px;top:857.2px" width="22.4" height="22.4" viewBox="0 0 1792 1792"><path fill="#333" stroke="#333" stroke-width="32.0" d="M1600 736v192q0 40-28 68t-68 28h-416v416q0 40-28 68t-68 28h-192q-40 0-68-28t-28-68v-416h-416q-40 0-68-28t-28-68v-192q0-40 28-68t68-28h416v-416q0-40 28-68t68-28h192q40 0 68 28t28 68v416h416q40 0 68 28t28 68z"/></svg>
<div class="abs" style="top:900px;font-size:19.2px;line-height:24px;left:1618px;transform:translateX(-50%);font-style:italic;">szt.</div>
<div class="abs" style="top:866px;font-size:26.88px;line-height:34px;font-weight:bold;left:1882px;transform:translateX(-50%);">8,00 zł</div>
<div class="abs ibtn" style="left:2042px;top:854px;"></div>
<svg class="abs" style="left:2055.4px;top:866.9px" width="29.4" height="29.4" viewBox="0 0 1792 1792"><path fill="#3c8eee" stroke="#3c8eee" stroke-width="24.4" d="M1664 256v448q0 26-19 45t-45 19h-448q-42 0-59-40-17-39 14-69l138-138q-148-137-349-137-104 0-198.500 40.500t-163.500 109.500-109.500 163.500-40.500 198.500 40.500 198.500 109.500 163.500 163.500 109.500 198.500 40.500q119 0 225-52t179-147q7-10 23-12 15 0 25 9l137 138q9 8 9.500 20.500t-7.500 22.500q-109 132-264 204.500t-327 72.500q-156 0-298-61t-245-164-164-245-61-298 61-298 164-245 245-164 298-61q147 0 284.500 55.500t244.500 156.500l130-129q29-31 70-14 39 17 39 59z"/></svg>

<div class="abs bar" style="left:234px;top:940px;width:1872px;height:92px;"></div>
<svg class="abs" style="left:252px;top:976px" width="19" height="19" viewBox="0 0 19 19"><rect x=".75" y=".75" width="17.5" height="17.5" rx="3.6" fill="#fff" stroke="#767676" stroke-width="1.5"/></svg>
<div class="abs" style="top:976px;font-size:19.1px;line-height:24px;left:288px;">Zaznacz wszystkie</div>
<svg class="abs" style="left:522.8px;top:972.4px" width="25.0" height="25.0" viewBox="0 0 1792 1792"><path fill="#333" stroke="#333" stroke-width="28.7" d="M704 1376v-704q0-14-9-23t-23-9h-64q-14 0-23 9t-9 23v704q0 14 9 23t23 9h64q14 0 23-9t9-23zm256 0v-704q0-14-9-23t-23-9h-64q-14 0-23 9t-9 23v704q0 14 9 23t23 9h64q14 0 23-9t9-23zm256 0v-704q0-14-9-23t-23-9h-64q-14 0-23 9t-9 23v704q0 14 9 23t23 9h64q14 0 23-9t9-23zm-544-992h448l-48-117q-7-9-17-11h-317q-10 2-17 11zm928 32v64q0 14-9 23t-23 9h-96v948q0 83-47 143.500t-113 60.500h-832q-66 0-113-58.500t-47-141.500v-952h-96q-14 0-23-9t-9-23v-64q0-14 9-23t23-9h309l70-167q15-37 54-63t79-26h320q40 0 79 26t54 63l70 167h309q14 0 23 9t9 23z"/></svg>
<div class="abs" style="top:974px;font-size:19.2px;line-height:24px;left:556px;">Usuń z koszyka</div>
<svg class="abs" style="left:1554.5px;top:972.5px" width="25.2" height="25.2" viewBox="0 0 1792 1792"><path fill="#333" stroke="#333" stroke-width="28.4" d="M512 1536h768v-384h-768v384zm896 0h128v-896q0-14-10-38.500t-20-34.500l-281-281q-10-10-34-20t-39-10v416q0 40-28 68t-68 28h-576q-40 0-68-28t-28-68v-416h-128v1280h128v-416q0-40 28-68t68-28h832q40 0 68 28t28 68v416zm-384-928v-320q0-13-9.500-22.500t-22.500-9.500h-192q-13 0-22.500 9.500t-9.500 22.500v320q0 13 9.500 22.500t22.500 9.500h192q13 0 22.500-9.500t9.500-22.500zm640 32v928q0 40-28 68t-68 28h-1344q-40 0-68-28t-28-68v-1344q0-40 28-68t68-28h928q40 0 88 20t76 48l280 280q28 28 48 76t20 88z"/></svg>
<div class="abs" style="top:974px;font-size:19.2px;line-height:24px;left:1587px;">Zapisz koszyk w liście zakupowej</div>
<svg class="abs" style="left:1906.9px;top:972.5px" width="25.2" height="25.2" viewBox="0 0 1792 1792"><path fill="#333" stroke="#333" stroke-width="28.4" d="M1664 256v448q0 26-19 45t-45 19h-448q-42 0-59-40-17-39 14-69l138-138q-148-137-349-137-104 0-198.500 40.500t-163.500 109.500-109.500 163.500-40.500 198.500 40.500 198.500 109.500 163.500 163.500 109.500 198.500 40.500q119 0 225-52t179-147q7-10 23-12 15 0 25 9l137 138q9 8 9.500 20.500t-7.500 22.500q-109 132-264 204.500t-327 72.500q-156 0-298-61t-245-164-164-245-61-298 61-298 164-245 245-164 298-61q147 0 284.500 55.500t244.500 156.500l130-129q29-31 70-14 39 17 39 59z"/></svg>
<div class="abs" style="top:974px;font-size:19.2px;line-height:24px;left:1939px;">Przelicz koszyk</div>

<div class="abs sum" style="left:234px;top:1056px;width:1872px;height:368px;"></div>
<div class="abs hl" style="left:236px;top:1292px;width:1868px;height:2px;"></div>
<svg class="abs" style="left:259.98px;top:1084.86px" width="29.2" height="29.2" viewBox="0 0 1792 1792"><path fill="#333" stroke="#333" stroke-width="24.5" d="M640 1408q0-52-38-90t-90-38-90 38-38 90 38 90 90 38 90-38 38-90zm-384-512h384v-256h-158q-13 0-22 9l-195 195q-9 9-9 22v30zm1280 512q0-52-38-90t-90-38-90 38-38 90 38 90 90 38 90-38 38-90zm256-1088v1024q0 15-4 26.500t-13.500 18.500-16.500 11.500-23.500 6-22.500 2-25.500 0-22.500-.5q0 106-75 181t-181 75-181-75-75-181h-384q0 106-75 181t-181 75-181-75-75-181h-64q-3 0-22.500.5t-25.500 0-22.500-2-23.500-6-16.500-11.500-13.500-18.500-4-26.500q0-26 19-45t45-19v-320q0-8-.5-35t0-38 2.500-34.500 6.500-37 14-30.500 22.500-30l198-198q19-19 50.500-32t58.500-13h160v-192q0-26 19-45t45-19h1024q26 0 45 19t19 45z"/></svg>
<div class="abs" style="top:1087px;font-size:22.4px;line-height:28px;left:305px;">Przewidywana dostawa - <b>Poniedziałek</b></div>
<div class="abs" style="top:1083px;font-size:22.4px;line-height:28px;left:1316px;">Wartość zamówienia:</div>
<div class="abs" style="top:1111px;font-size:22.4px;line-height:28px;left:1316px;">Koszt przesyłki od:</div>
<div class="abs" style="top:1083px;font-size:22.4px;line-height:28px;font-weight:bold;right:270px;">228,00 zł</div>
<div class="abs" style="top:1111px;font-size:22.4px;line-height:28px;font-weight:bold;right:270px;"><span style="letter-spacing:-1.2px">+ </span>10,00 zł</div>
<div class="abs" style="top:1170px;font-size:44.8px;line-height:56px;left:1316px;-webkit-text-stroke:.55px;">Do zapłaty:</div>
<div class="abs" style="top:1170px;font-size:44.8px;line-height:56px;font-weight:bold;right:270px;-webkit-text-stroke:.5px;">180,00 zł brutto</div>
<a class="abs" style="top:1345px;font-size:22.4px;line-height:28px;left:284.5px;text-decoration:underline;">Kontynuuj zakupy w sklepie</a>
<div class="abs btn" style="left:1838px;top:1318px;width:242px;height:80px;"></div>
<div class="abs" style="top:1343px;font-size:23.8px;line-height:30px;font-weight:bold;color:#fff;left:1873px;">Przejdź dalej</div>
<svg class="abs" style="left:2040px;top:1344px" width="20" height="28" viewBox="0 0 20 28"><path d="M5.6 5.9 L13.9 14.4 L5.6 22.9" fill="none" stroke="#fff" stroke-width="3.3"/></svg>

</div>
</body>
</html>
